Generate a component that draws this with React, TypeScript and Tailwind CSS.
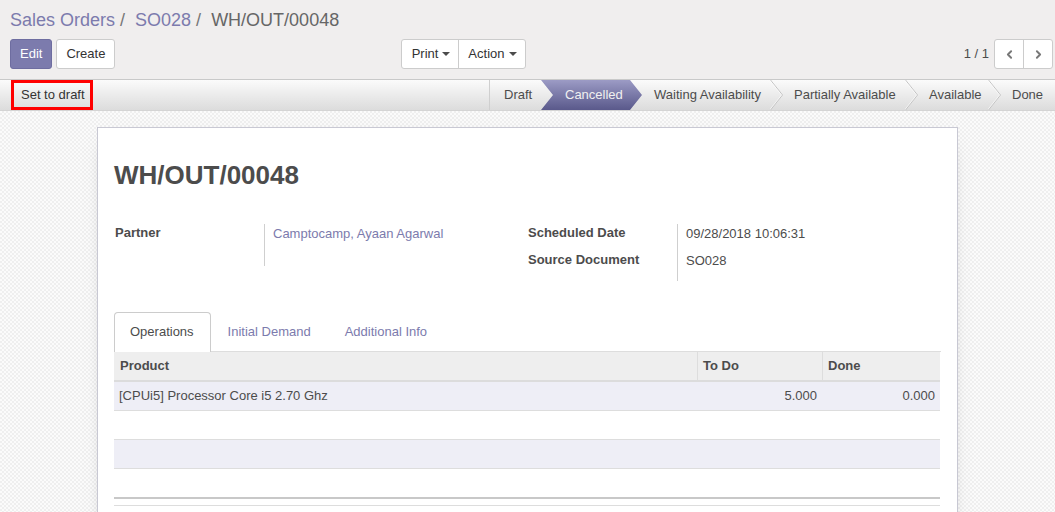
import React from "react";
import { ChevronLeft, ChevronRight } from "lucide-react";

const Caret = () => (
  <span className="ml-[4px] inline-block h-0 w-0 border-x-[4px] border-t-[4px] border-x-transparent border-t-[#4c4c4c] align-middle" />
);

const Chevron = () => (
  <svg className="absolute left-full top-0 z-0 h-[30px] w-[14px]" viewBox="0 0 14 30">
    <polyline points="0.5,0 12.5,15 0.5,30" fill="none" stroke="#c4c4c4" strokeWidth="1" />
    <polyline points="-0.5,0 11.5,15 -0.5,30" fill="none" stroke="#ffffff" strokeOpacity="0.6" strokeWidth="1" />
  </svg>
);

type Step = { label: string; w: string; first?: boolean; active?: boolean; last?: boolean; beforeActive?: boolean };

const steps: Step[] = [
  { label: "Draft", w: "w-[52px]", first: true, beforeActive: true },
  { label: "Cancelled", w: "w-[89px]", active: true },
  { label: "Waiting Availability", w: "w-[140px]" },
  { label: "Partially Available", w: "w-[135px]" },
  { label: "Available", w: "w-[83px]" },
  { label: "Done", w: "w-[67px]", last: true },
];

export default function App() {
  return (
    <div className="h-[512px] w-full overflow-hidden font-['Liberation_Sans',Arial,sans-serif] text-[13px] text-[#4c4c4c]">
      {/* Control panel */}
      <div className="border-b border-[#c9c9c9] bg-[#f0eeee] pb-[10px] pt-[8px]">
        <div className="pl-[10px] text-[18px] leading-[24px]">
          <span className="text-[#7c7bad]">Sales Orders</span>
          <span className="text-[#777]">&nbsp;/&nbsp; </span>
          <span className="text-[#7c7bad]">SO028</span>
          <span className="text-[#777]">&nbsp;/&nbsp; </span>
          <span className="text-[#666]">WH/OUT/00048</span>
        </div>
        <div className="mt-[7px] flex h-[30px]">
          <div className="flex w-1/2 items-center justify-between pl-[10px] pr-[2px]">
            <div className="flex gap-[4px]">
              <button className="h-[30px] rounded-[3px] border border-[#6e6da0] bg-[#7c7bad] px-[9px] text-white">Edit</button>
              <button className="h-[30px] rounded-[3px] border border-[#ccc] bg-white px-[9px] text-[#333]">Create</button>
            </div>
            <div className="flex h-[30px] rounded-[3px] border border-[#ccc] bg-white text-[#333]">
              <button className="flex items-center border-r border-[#ccc] pl-[10px] pr-[8px]">
                Print
                <Caret />
              </button>
              <button className="flex items-center pl-[9px] pr-[8px]">
                Action
                <Caret />
              </button>
            </div>
          </div>
          <div className="flex w-1/2 items-center justify-end pr-[2px]">
            <span className="mr-[5px] text-[#4c4c4c]">1 / 1</span>
            <div className="flex h-[30px] rounded-[3px] border border-[#ccc] bg-white">
              <button className="flex w-[29px] items-center justify-center border-r border-[#ccc] text-[#777]">
                <ChevronLeft size={13} strokeWidth={3.5} />
              </button>
              <button className="flex w-[28px] items-center justify-center text-[#777]">
                <ChevronRight size={13} strokeWidth={3.5} />
              </button>
            </div>
          </div>
        </div>
      </div>

      {/* Status bar */}
      <div className="flex h-[31px] items-stretch justify-between border-b border-[#d4d4d4] bg-linear-to-b from-[#fbfbfb] to-[#dcdcdc]">
        <div className="flex items-stretch pl-[11px]">
          <button className="flex items-center border-[3px] border-[#ff0000] pl-[7px] pr-[5px] text-[#333]">Set to draft</button>
        </div>
        <div className="flex items-stretch">
          {steps.map((s) => (
            <div
              key={s.label}
              className={`relative flex items-center ${s.w} ${s.first ? "border-l border-[#cfcfcf] pl-[14px]" : "pl-[24px]"} ${s.active ? "z-10 text-[#f0f0f0]" : "text-[#4c4c4c]"}`}
            >
              {s.active && (
                <span className="absolute inset-y-0 left-0 right-[-12px] bg-linear-to-b from-[#9c9bc5] to-[#5a598b] [clip-path:polygon(0_0,calc(100%_-_12px)_0,100%_50%,calc(100%_-_12px)_100%,0_100%,12px_50%)]" />
              )}
              <span className="relative whitespace-nowrap">{s.label}</span>
              {!s.active && !s.last && !s.beforeActive && <Chevron />}
            </div>
          ))}
        </div>
      </div>

      {/* Content area */}
      <div className="h-full [background-image:repeating-conic-gradient(#efefef_0_25%,#fbfbfb_0_50%)] [background-size:4px_4px] pt-[16px]">
        <div className="mx-auto w-[861px] border border-[#c8c8d3] bg-white pb-[40px] pl-[17px] pr-[16px] pt-[31px] shadow-[0_5px_20px_-15px_rgba(0,0,0,0.6)]">
          <h1 className="-ml-px text-[26px] font-bold leading-[32px] text-[#4c4c4c]">WH/OUT/00048</h1>

          <div className="mt-[33px] grid grid-cols-2">
            <div className="grid grid-cols-[150px_1fr]">
              <div className="h-[42px] border-r border-[#cfcfcf] font-bold leading-[18px]">Partner</div>
              <div className="pl-[8px] leading-[20px] text-[#7c7bad]">Camptocamp, Ayaan Agarwal</div>
            </div>
            <div className="grid grid-cols-[150px_1fr]">
              <div className="h-[27px] border-r border-[#cfcfcf] font-bold leading-[18px]">Scheduled Date</div>
              <div className="pl-[8px] leading-[20px]">09/28/2018 10:06:31</div>
              <div className="h-[30px] border-r border-[#cfcfcf] font-bold leading-[18px]">Source Document</div>
              <div className="pl-[8px] leading-[20px]">SO028</div>
            </div>
          </div>

          {/* Notebook */}
          <div className="-ml-px mt-[31px]">
            <div className="flex h-[40px] items-stretch border-b border-[#ddd]">
              <div className="-mb-px flex items-center rounded-t-[4px] border border-b-0 border-[#ccc] bg-white pb-[2px] pl-[15px] pr-[16px] text-[#4c4c4c]">
                Operations
              </div>
              <div className="ml-[1px] flex items-center px-[16px] text-[#7c7bad]">Initial Demand</div>
              <div className="ml-[2px] flex items-center px-[16px] text-[#7c7bad]">Additional Info</div>
            </div>

            <div className="w-[826px]">
              <div className="flex h-[30px] border-b-2 border-[#dcdcdc] bg-[#eee] font-bold">
                <div className="flex w-[584px] items-center border-r border-[#ddd] pl-[6px]">Product</div>
                <div className="flex w-[125px] items-center border-r border-[#ddd] pl-[5px]">To Do</div>
                <div className="flex flex-1 items-center pl-[5px]">Done</div>
              </div>
              <div className="flex h-[29px] border-b border-[#ddd] bg-[#eeeef6]">
                <div className="flex w-[584px] items-center pl-[5px]">[CPUi5] Processor Core i5 2.70 Ghz</div>
                <div className="flex w-[125px] items-center justify-end pr-[6px]">5.000</div>
                <div className="flex flex-1 items-center justify-end pr-[5px]">0.000</div>
              </div>
              <div className="h-[29px] border-b border-[#ddd] bg-white" />
              <div className="h-[29px] border-b border-[#ddd] bg-[#eeeef6]" />
              <div className="h-[28px] bg-white" />
              <div className="h-[9px] border-b border-t-2 border-b-[#ddd] border-t-[#c8c8c8] bg-white" />
            </div>
          </div>
        </div>
      </div>
    </div>
  );
}
